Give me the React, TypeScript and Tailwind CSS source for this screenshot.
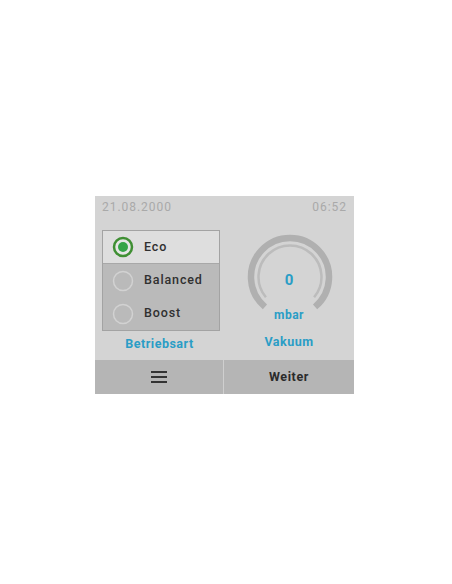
import React from 'react';

const font = { fontFamily: 'Roboto, "Liberation Sans", sans-serif' };

const modes = [
  { label: 'Eco', active: true },
  { label: 'Balanced', active: false },
  { label: 'Boost', active: false },
];

const Radio: React.FC<{ active: boolean }> = ({ active }) =>
  active ? (
    <svg width="22" height="22" viewBox="0 0 22 22">
      <circle cx="11" cy="11" r="9" fill="#e6e6e6" stroke="#3f8f33" strokeWidth="2.5" />
      <circle cx="11" cy="11" r="5" fill="#35a447" />
    </svg>
  ) : (
    <svg width="22" height="22" viewBox="0 0 22 22">
      <circle cx="11" cy="11" r="9.5" fill="none" stroke="#d2d2d2" strokeWidth="1.5" />
    </svg>
  );

const Gauge: React.FC = () => (
  <div className="relative h-[99px] w-full">
    <svg
      className="absolute left-[21px] top-[2px]"
      width="90"
      height="90"
      viewBox="0 0 90 90"
    >
      <path
        d="M 19.93 74.87 A 39 39 0 1 1 70.07 74.87"
        fill="none"
        stroke="#b0b0b0"
        strokeWidth="6.5"
      />
      <path
        d="M 20.9 65.2 A 31.5 31.5 0 1 1 69.1 65.2"
        fill="none"
        stroke="#bcbcbc"
        strokeWidth="2.5"
      />
    </svg>
    <div className="absolute left-0 right-0 top-[43px] text-center text-[15px] font-bold leading-none text-[#2a9dc6]">
      0
    </div>
    <div className="absolute left-0 right-0 top-[79px] text-center text-[12px] font-bold leading-none tracking-[0.04em] text-[#2a9dc6]">
      mbar
    </div>
  </div>
);

const App: React.FC = () => {
  return (
    <div className="min-h-[584px] w-[452px] bg-white pl-[95px] pt-[196px]" style={font}>
      <div className="w-[259px] bg-[#d4d4d4]">
        {/* Header */}
        <div className="flex h-[22px] items-center justify-between px-[7px] text-[12px] tracking-[0.08em] text-[#a9a9a9]">
          <span>21.08.2000</span>
          <span>06:52</span>
        </div>

        {/* Content */}
        <div className="grid grid-cols-[129px_130px] pt-[12px]">
          <div className="flex flex-col">
            <div className="ml-[7px] w-[118px] border border-[#a3a3a3] bg-[#bababa]">
              {modes.map((m) => (
                <div
                  key={m.label}
                  className={`flex h-[33px] items-center gap-[10px] pl-[9px] text-[12.5px] font-medium tracking-[0.07em] text-[#303030] ${
                    m.active ? 'bg-[#dedede] border-b border-[#a8a8a8]' : ''
                  }`}
                >
                  <Radio active={m.active} />
                  <span>{m.label}</span>
                </div>
              ))}
            </div>
            <div className="flex h-[27px] items-center justify-center text-[12.5px] font-bold tracking-[0.04em] text-[#2a9dc6]">
              Betriebsart
            </div>
          </div>
          <div className="flex flex-col">
            <Gauge />
            <div className="flex h-[27px] items-center justify-center text-[12.5px] font-bold tracking-[0.04em] text-[#2a9dc6]">
              Vakuum
            </div>
          </div>
        </div>

        {/* Bottom bar */}
        <div className="mt-[2px] grid h-[34px] grid-cols-[128px_1px_130px] bg-[#b5b5b5]">
          <div className="flex items-center justify-center">
            <div className="flex w-[16px] flex-col gap-[3px]">
              <div className="h-[2px] bg-[#333333]" />
              <div className="h-[2px] bg-[#333333]" />
              <div className="h-[2px] bg-[#333333]" />
            </div>
          </div>
          <div className="bg-[#cfcfcf]" />
          <div className="flex items-center justify-center text-[12.5px] font-bold tracking-[0.05em] text-[#2b2b2b]">
            Weiter
          </div>
        </div>
      </div>
    </div>
  );
};

export default App;
